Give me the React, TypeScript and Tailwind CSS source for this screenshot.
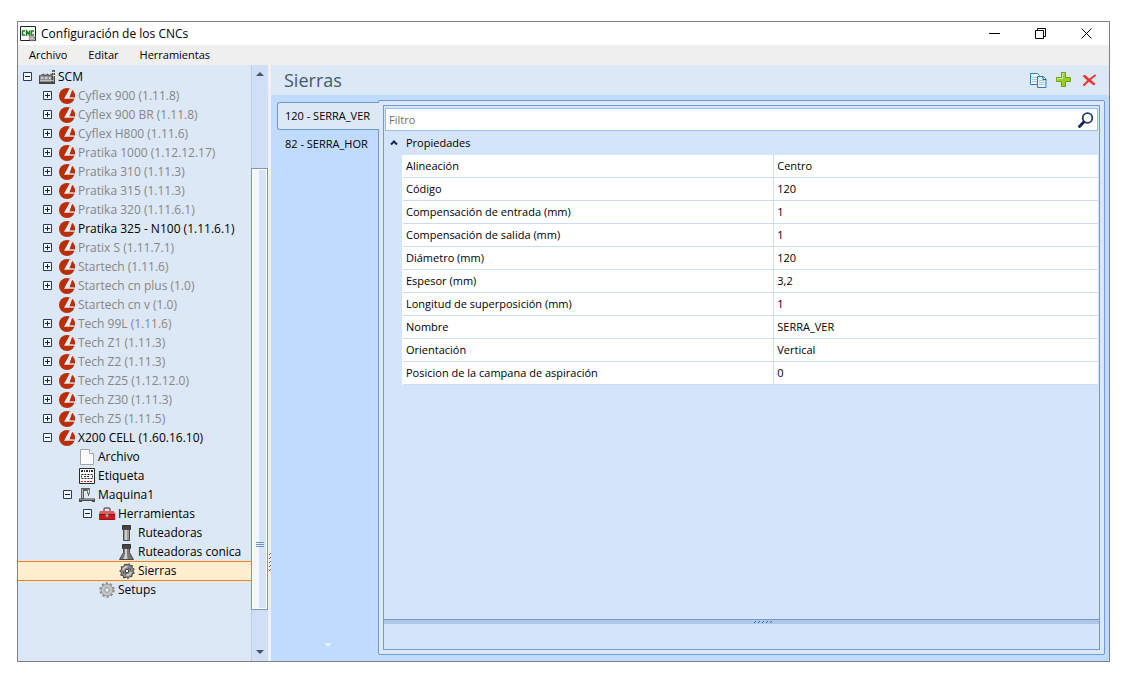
import { useState } from 'react';
import type { ReactNode } from 'react';
import clsx from 'clsx';

type IconName = 'factory' | 'scm' | 'file' | 'label' | 'machine' | 'toolbox' | 'router' | 'conic' | 'saw' | 'gear';

interface TreeItem {
  level: 0 | 1 | 2 | 3 | 4;
  icon: IconName;
  label: string;
  toggle?: 'plus' | 'minus';
  muted?: boolean;
}

const tree: TreeItem[] = [
  { level: 0, icon: 'factory', label: 'SCM', toggle: 'minus' },
  { level: 1, icon: 'scm', label: 'Cyflex 900 (1.11.8)', toggle: 'plus', muted: true },
  { level: 1, icon: 'scm', label: 'Cyflex 900 BR (1.11.8)', toggle: 'plus', muted: true },
  { level: 1, icon: 'scm', label: 'Cyflex H800 (1.11.6)', toggle: 'plus', muted: true },
  { level: 1, icon: 'scm', label: 'Pratika 1000 (1.12.12.17)', toggle: 'plus', muted: true },
  { level: 1, icon: 'scm', label: 'Pratika 310 (1.11.3)', toggle: 'plus', muted: true },
  { level: 1, icon: 'scm', label: 'Pratika 315 (1.11.3)', toggle: 'plus', muted: true },
  { level: 1, icon: 'scm', label: 'Pratika 320 (1.11.6.1)', toggle: 'plus', muted: true },
  { level: 1, icon: 'scm', label: 'Pratika 325 - N100 (1.11.6.1)', toggle: 'plus' },
  { level: 1, icon: 'scm', label: 'Pratix S (1.11.7.1)', toggle: 'plus', muted: true },
  { level: 1, icon: 'scm', label: 'Startech (1.11.6)', toggle: 'plus', muted: true },
  { level: 1, icon: 'scm', label: 'Startech cn plus (1.0)', toggle: 'plus', muted: true },
  { level: 1, icon: 'scm', label: 'Startech cn v (1.0)', muted: true },
  { level: 1, icon: 'scm', label: 'Tech 99L (1.11.6)', toggle: 'plus', muted: true },
  { level: 1, icon: 'scm', label: 'Tech Z1 (1.11.3)', toggle: 'plus', muted: true },
  { level: 1, icon: 'scm', label: 'Tech Z2 (1.11.3)', toggle: 'plus', muted: true },
  { level: 1, icon: 'scm', label: 'Tech Z25 (1.12.12.0)', toggle: 'plus', muted: true },
  { level: 1, icon: 'scm', label: 'Tech Z30 (1.11.3)', toggle: 'plus', muted: true },
  { level: 1, icon: 'scm', label: 'Tech Z5 (1.11.5)', toggle: 'plus', muted: true },
  { level: 1, icon: 'scm', label: 'X200 CELL (1.60.16.10)', toggle: 'minus' },
  { level: 2, icon: 'file', label: 'Archivo' },
  { level: 2, icon: 'label', label: 'Etiqueta' },
  { level: 2, icon: 'machine', label: 'Maquina1', toggle: 'minus' },
  { level: 3, icon: 'toolbox', label: 'Herramientas', toggle: 'minus' },
  { level: 4, icon: 'router', label: 'Ruteadoras' },
  { level: 4, icon: 'conic', label: 'Ruteadoras conica' },
  { level: 4, icon: 'saw', label: 'Sierras' },
  { level: 3, icon: 'gear', label: 'Setups' },
];

const properties = [
  ['Alineación', 'Centro'],
  ['Código', '120'],
  ['Compensación de entrada (mm)', '1'],
  ['Compensación de salida (mm)', '1'],
  ['Diámetro (mm)', '120'],
  ['Espesor (mm)', '3,2'],
  ['Longitud de superposición (mm)', '1'],
  ['Nombre', 'SERRA_VER'],
  ['Orientación', 'Vertical'],
  ['Posicion de la campana de aspiración', '0'],
];

const indent = ['pl-1', 'pl-6', 'pl-11', 'pl-16', 'pl-21'];

const icons: Record<IconName, ReactNode> = {
  factory: (
    <>
      <path d="M13.500 14.500v-13h2v13z" fill="#999" stroke="#4b4b4b" />
      <path d="M13 3.500h3M13 6.500h3" stroke="#e6e6e6" />
      <path d="M.5 14.500V6.500h1L5 5v2l4-2v2l4-2v9.500z" fill="#909090" stroke="#4b4b4b" />
      <path d="M2 9h2.500M6 9h2.500M10 9h2" stroke="#e0e0e0" strokeWidth="1.500" />
      <path d="M1 11.500h13" stroke="#bdbdbd" />
      <path d="M0 14h16" stroke="#444" strokeWidth="2" />
    </>
  ),
  scm: (
    <>
      <circle cx="8" cy="8" r="8" fill="#bb2d05" />
      <path d="M10.800.2 5 10.800h5.500V9.500l3-8z" fill="#e4ecf8" />
      <path d="M10.400 9h5.900v1.700h-5.900z" fill="#e4ecf8" />
      <path d="m13 2.500-2.200 6.700 5.200.2a8 8 0 0 0-3-6.900z" fill="#bb2d05" />
    </>
  ),
  file: (
    <>
      <path d="M1.500.5h9l4 4v11h-13z" fill="#fafafa" stroke="#a3a3a3" />
      <path d="M10.500.5v4h4" fill="#fff" stroke="#a3a3a3" />
    </>
  ),
  label: (
    <>
      <path d="M.5.5h15v15H.5z" fill="#fff" stroke="#2b2b2b" />
      <path d="M2 3h12" stroke="#2b2b2b" strokeWidth="2" strokeDasharray="2 1 1 1" />
      <path d="M2.500 6.500h11v4h-11z" fill="none" stroke="#2b2b2b" strokeDasharray="2 1" />
      <path d="M5 8.500h6" stroke="#2b2b2b" strokeDasharray="2 1" />
      <path d="M2 13.500h12" stroke="#d91010" strokeDasharray="2 1" />
    </>
  ),
  machine: (
    <>
      <path d="M2 1h9v3H5v8H2z" fill="#606060" />
      <path d="M3 2h1v9H3z" fill="#b5b5b5" />
      <path d="M8 2h3v5H8z" fill="#777" />
      <path d="M9 3h1v3H9z" fill="#e5e5e5" />
      <path d="M9.500 7v2" stroke="#555" />
      <path d="M0 11.500h16V15h-3v-1H3v1H0z" fill="#4b4b4b" />
      <path d="M1 12.500h14" stroke="#8a8a8a" />
    </>
  ),
  toolbox: (
    <>
      <path d="M5 5V3.500Q5 2 6.500 2h3Q11 2 11 3.500V5" fill="none" stroke="#666" strokeWidth="1.500" />
      <path d="M1 5h14l1 3v1H0V8z" fill="#e45a55" />
      <path d="M0 8h16v6H0z" fill="#c91a1d" />
      <path d="M0 8.500h16" stroke="#8e1012" />
      <path d="M1 13.500h14" stroke="#9c1315" />
      <path d="M7 8h2v3H7z" fill="#e8e8e8" stroke="#777" />
    </>
  ),
  router: (
    <>
      <path d="M3.500.5h8v4h-8z" fill="#444" stroke="#333" />
      <path d="M4.500 4.500h6v11h-6z" fill="#999" stroke="#4a4a4a" />
      <path d="M7 5v10" stroke="#d0d0d0" strokeWidth="2" />
    </>
  ),
  conic: (
    <>
      <path d="M3.500.5h8v4h-8z" fill="#444" stroke="#333" />
      <path d="M4.500 4.500h6v4l4 7H.5l4-7z" fill="#777" stroke="#4a4a4a" />
      <path d="M6 5h2v5l.5 5h-4L6 10z" fill="#d0d0d0" />
    </>
  ),
  saw: (
    <>
      <path
        d="M8 1.500 10.500.8l.3 2 2.700-.3-.5 2.200 2.300 1.300-1.300 1.800 1.300 2.500-2.200.7-.1 2.700-2.300-.1-1.500 2.100-1.800-1.500-2.700.9-.3-2.300-2.700-.6.8-2.200L.7 7.700l2-1.200-.5-2.700 2.300 0 1-2.500z"
        fill="#8a8a8a"
        stroke="#4a4a4a"
      />
      <path d="M4 7q1-3.500 4.500-3.200M12 9q-1 3.500-4.500 3.200" fill="none" stroke="#d2d2d2" strokeWidth="1.500" />
      <path d="M9 5q3 .5 3 3M7 11q-3-.5-3-3" fill="none" stroke="#555" />
      <circle cx="8" cy="8" r="1.700" fill="#fff" stroke="#3c3c3c" />
    </>
  ),
  gear: (
    <>
      <circle cx="8" cy="8" r="6.500" fill="none" stroke="#8c8c8c" strokeWidth="2.400" strokeDasharray="2.300 1.780" />
      <circle cx="8" cy="8" r="4.400" fill="none" stroke="#c4c4c4" strokeWidth="3.200" />
      <circle cx="8" cy="8" r="5.800" fill="none" stroke="#8f8f8f" strokeWidth=".7" />
      <circle cx="8" cy="8" r="2.400" fill="#dde8f6" stroke="#8c8c8c" />
    </>
  ),
};

function Toggle({ kind }: { kind: 'plus' | 'minus' }) {
  return (
    <button type="button" aria-label={kind === 'plus' ? 'Expandir' : 'Contraer'}>
      <svg viewBox="0 0 9 9" className="size-[9px]">
        <path d="M.5.5h8v8h-8z" fill="#f6f9ff" stroke="#26396a" />
        <path d="M2 4.500h5" stroke="#111f4d" />
        {kind === 'plus' && <path d="M4.500 2v5" stroke="#111f4d" />}
      </svg>
    </button>
  );
}

function TreeRow({ item, selected, onSelect }: { item: TreeItem; selected: boolean; onSelect: () => void }) {
  return (
    <li
      role="treeitem"
      aria-selected={selected}
      onClick={onSelect}
      className={clsx(
        'flex items-center whitespace-nowrap',
        indent[item.level],
        selected ? '-mb-px h-5 border-y border-[#fb820a] bg-[#ffefcf]' : 'h-[19px]',
        item.muted ? 'text-[#868686]' : 'text-black',
      )}
    >
      <span className="mr-[7px] flex w-[10px] shrink-0 justify-end">{item.toggle && <Toggle kind={item.toggle} />}</span>
      <svg viewBox="0 0 16 16" className="mr-[3px] size-4 shrink-0">
        {icons[item.icon]}
      </svg>
      {item.label}
    </li>
  );
}

function TreeScrollbar() {
  return (
    <div className="flex w-[17px] shrink-0 flex-col border-l border-[#bccde4] bg-[#d0dff3]">
      <button type="button" aria-label="Subir" className="flex h-[17px] items-center justify-center">
        <svg viewBox="0 0 8 4" className="h-1 w-2">
          <path d="M0 4 4 0l4 4z" fill="#46546e" />
        </svg>
      </button>
      <div className="flex-[86]" />
      <div className="-ml-px flex flex-[442] items-center justify-center border border-[#7a94c1] bg-linear-to-r from-[#f3f7fd] from-45% to-[#d6e4f6] to-50% ring-1 ring-white ring-inset">
        <svg viewBox="0 0 8 6" className="mt-[312px] h-[6px] w-2">
          <path d="M0 .5h8M0 2.500h8M0 4.500h8" stroke="#7393c6" />
        </svg>
      </div>
      <div className="flex-[34]" />
      <button type="button" aria-label="Bajar" className="flex h-[17px] items-center justify-center">
        <svg viewBox="0 0 8 4" className="h-1 w-2">
          <path d="M0 0h8L4 4z" fill="#46546e" />
        </svg>
      </button>
    </div>
  );
}

function TitleBar() {
  return (
    <header className="flex h-[23px] items-center bg-white pl-[2px]">
      <svg viewBox="0 0 16 16" className="size-4">
        <path d="M.5.5h15v14H.5z" fill="#fff" stroke="#222" />
        <path d="M5 5H2.500v4H5M6.500 10V5l3 4V4.500M14 5h-2.500v4H14" fill="none" stroke="#188018" strokeWidth="1.500" />
        <circle cx="12" cy="12" r="2.500" fill="none" stroke="#888" strokeWidth="2" strokeDasharray="1.400 .6" />
        <circle cx="12" cy="12" r="1.500" fill="#ddd" stroke="#999" />
      </svg>
      <h1 className="ml-[5px] flex-1 text-[12px]">Configuración de los CNCs</h1>
      <button type="button" aria-label="Minimizar" className="flex h-full w-[46px] items-center justify-center">
        <svg viewBox="0 0 11 11" className="size-[11px]">
          <path d="M0 5.500h11" stroke="#000" />
        </svg>
      </button>
      <button type="button" aria-label="Restaurar" className="flex h-full w-[46px] items-center justify-center">
        <svg viewBox="0 0 11 11" className="size-[11px]">
          <path d="M.5 2.500h8v8h-8zM2.500 2V.5h8v8H9" fill="none" stroke="#000" />
        </svg>
      </button>
      <button type="button" aria-label="Cerrar" className="flex h-full w-[46px] items-center justify-center">
        <svg viewBox="0 0 11 11" className="size-[11px]">
          <path d="m.5.5 10 10M10.500.5l-10 10" stroke="#000" />
        </svg>
      </button>
    </header>
  );
}

function PanelHeader() {
  return (
    <div className="flex h-[30px] items-center bg-[#dde8f6] pr-3 pl-[13px]">
      <h2 className="flex-1 text-[18px] text-[#44586f]">Sierras</h2>
      <div className="flex items-center gap-[9px]">
        <button type="button" aria-label="Copiar">
          <svg viewBox="0 0 17 17" className="size-[17px]">
            <path d="M.5 1.500h7l2 2v9h-9z" fill="#e9f5fb" stroke="#2b83b4" />
            <path d="M2 5.500h5M2 7.500h5M2 9.500h5" stroke="#9ccbe2" />
            <path d="M7.500 4.500h6l2.500 2.500v8.500H7.500z" fill="#e9f5fb" stroke="#2b83b4" />
            <path d="M9 8.500h5.500M9 10.500h5.500M9 12.500h5.500" stroke="#9ccbe2" />
            <path d="M13 4.500v3h3" fill="#fff" stroke="#1b5f88" />
          </svg>
        </button>
        <button type="button" aria-label="Agregar">
          <svg viewBox="0 0 16 16" className="size-4">
            <path d="M5.500.5h4v5h5v4h-5v5h-4v-5h-5v-4h5z" fill="#9bd11d" stroke="#6c9f12" />
            <path d="M6.500 6.500v-5h2M1.500 8.500v-2h5" fill="none" stroke="#d0ee86" />
          </svg>
        </button>
        <button type="button" aria-label="Eliminar">
          <svg viewBox="0 0 16 16" className="size-4">
            <path d="M1.500 4 4 2.800q4 4.200 10.500 9L13 13.500Q6.500 9.500 1.500 4z" fill="#f2302c" />
            <path d="M14 3.500Q8.500 7 3 13" fill="none" stroke="#f2302c" strokeWidth="2" strokeLinecap="round" />
          </svg>
        </button>
      </div>
    </div>
  );
}

function PropertyTable() {
  return (
    <table className="w-full table-fixed border-separate border-spacing-0 text-left">
      <colgroup>
        <col className="w-[19px]" />
        <col className="w-[52%]" />
        <col />
      </colgroup>
      <thead>
        <tr>
          <th className="h-6 p-0">
            <button type="button" aria-label="Contraer Propiedades" className="flex w-full justify-center">
              <svg viewBox="0 0 8 6" className="h-[6px] w-2">
                <path d="m1 4.500 3-3 3 3" fill="none" stroke="#15265a" strokeWidth="2" />
              </svg>
            </button>
          </th>
          <th colSpan={2} className="h-6 p-0 pl-[3px] font-normal">
            Propiedades
          </th>
        </tr>
      </thead>
      <tbody>
        {properties.map(([name, value]) => (
          <tr key={name}>
            <td className="h-[23px] border-r border-white p-0" />
            <th scope="row" className="h-[23px] border-r border-b border-[#cddcf3] bg-white p-0 pl-[3px] font-normal">
              {name}
            </th>
            <td className="h-[23px] border-b border-[#cddcf3] bg-white p-0 pl-[3px]">{value}</td>
          </tr>
        ))}
      </tbody>
    </table>
  );
}

export default function App() {
  const [selected, setSelected] = useState('Sierras');
  const [filter, setFilter] = useState('');

  return (
    <div className="flex min-h-screen flex-col bg-white pt-[21px] pr-[37px] pb-[27px] pl-[17px] font-['Open_Sans','Noto_Sans',sans-serif] text-[12px] leading-4 text-black">
      <div className="flex flex-1 flex-col border border-[#808080]">
        <TitleBar />
        <nav className="flex h-5 items-center gap-[21px] bg-[#efefef] pl-[11px] text-[11px]">
          <button type="button">Archivo</button>
          <button type="button">Editar</button>
          <button type="button">Herramientas</button>
        </nav>

        <div className="flex flex-1">
          <ul role="tree" aria-label="Configuración" className="w-[233px] shrink-0 bg-[#dde8f6] pt-[2px]">
            {tree.map((item) => (
              <TreeRow
                key={item.label}
                item={item}
                selected={item.label === selected}
                onSelect={() => setSelected(item.label)}
              />
            ))}
          </ul>
          <TreeScrollbar />
          <div className="flex w-[3px] shrink-0 items-center bg-[#f0f0f0]">
            <svg viewBox="0 0 2 20" className="mt-[400px] ml-px h-5 w-[2px]">
              <path d="M0 2 2 0M0 6l2-2M0 10l2-2M0 14l2-2M0 18l2-2" stroke="#2a72cc" />
            </svg>
          </div>

          <main className="flex min-w-0 flex-1 flex-col bg-[#bfdbff]">
            <PanelHeader />
            <div className="flex flex-1 pt-[5px] pr-1 pb-[6px] pl-[6px]">
              <div role="tablist" aria-label="Sierras" className="z-10 -mr-px flex w-[102px] shrink-0 flex-col pt-[2px]">
                <button
                  type="button"
                  role="tab"
                  aria-selected="true"
                  className="h-7 rounded-l-[3px] border border-r-0 border-[#7299d2] bg-[#dde8f6] pl-[7px] text-left text-[11px] whitespace-nowrap"
                >
                  120 - SERRA_VER
                </button>
                <button type="button" role="tab" aria-selected="false" className="h-7 pl-2 text-left text-[11px] whitespace-nowrap">
                  82 - SERRA_HOR
                </button>
                <svg viewBox="0 0 8 4" className="mx-auto mt-auto mb-2 h-1 w-2">
                  <path d="M0 0h8L4 4z" fill="#e3efff" />
                </svg>
              </div>

              <section className="flex min-w-0 flex-1 rounded-[2px] border border-[#7299d2] bg-[#dde8f6] p-1">
                <div className="flex min-w-0 flex-1 flex-col border border-[#7299d2] bg-[#d4e5fb]">
                  <div className="mx-px mt-[2px] flex h-[23px] items-center border border-[#9dbce8] bg-white pr-[3px]">
                    <input
                      type="text"
                      aria-label="Filtro"
                      placeholder="Filtro"
                      value={filter}
                      onChange={(e) => setFilter(e.target.value)}
                      className="min-w-0 flex-1 pl-[3px] text-[11px] outline-none placeholder:text-[#6e6e6e]"
                    />
                    <button type="button" aria-label="Buscar">
                      <svg viewBox="0 0 16 16" className="size-4">
                        <circle cx="9.500" cy="6" r="4.800" fill="#fff" stroke="#223866" strokeWidth="1.800" />
                        <path d="m1.500 14.500 4.300-4.500" stroke="#14244d" strokeWidth="2.800" strokeLinecap="round" />
                      </svg>
                    </button>
                  </div>
                  <div className="mr-px flex-1 text-[11px]">
                    <PropertyTable />
                  </div>
                  <div className="flex h-[5px] items-center justify-center border-t border-[#7299d2] bg-[#b0c7e8]">
                    <svg viewBox="0 0 20 2" className="ml-11 h-[2px] w-5">
                      <path d="m0 2 2-2M4 2l2-2M8 2l2-2M12 2l2-2M16 2l2-2" stroke="#2a72cc" />
                    </svg>
                  </div>
                  <div className="h-[25px]" />
                </div>
              </section>
            </div>
          </main>
        </div>
      </div>
    </div>
  );
}
